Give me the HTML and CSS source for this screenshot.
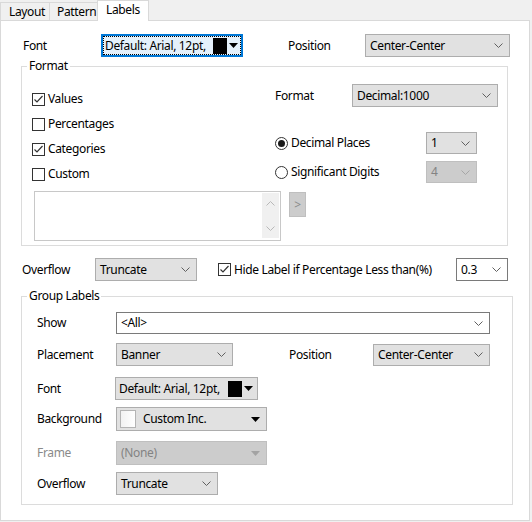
FILE: index.html
```html
<!DOCTYPE html>
<html>
<head>
<meta charset="utf-8">
<title>Labels</title>
<link rel="stylesheet" href="styles.css">
</head>
<body>
<div class="dialog">
  <div class="tabs">
    <div class="tab tab-layout">Layout</div>
    <div class="tab tab-pattern">Pattern</div>
    <div class="tab tab-labels active">Labels</div>
  </div>
  <div class="panel">
    <div class="toprow">
      <span class="lbl lbl-font">Font</span>
      <div class="fontbtn fontbtn-top focus">
        <span class="fb-text">Default: Arial, 12pt,</span>
        <span class="swatch"></span>
        <svg class="tri" width="9" height="5" viewBox="0 0 9 5"><polygon points="0,0 9,0 4.5,5" fill="#000"/></svg>
      </div>
      <span class="lbl lbl-pos">Position</span>
      <div class="dd w145"><span>Center-Center</span><svg class="chev" width="9" height="5" viewBox="0 0 9 5"><path d="M0.5 0.5 L4.5 4.5 L8.5 0.5" fill="none" stroke="#606060"/></svg></div>
    </div>

    <fieldset class="group fmt">
      <legend>Format</legend>
      <div class="fmt-top">
        <div class="checks">
          <div class="chk"><span class="box"><svg width="11" height="11" viewBox="0 0 11 11"><path d="M1.5 5.5 L4 8 L9.5 2" fill="none" stroke="#333" stroke-width="1.2"/></svg></span>Values</div>
          <div class="chk"><span class="box"></span>Percentages</div>
          <div class="chk"><span class="box"><svg width="11" height="11" viewBox="0 0 11 11"><path d="M1.5 5.5 L4 8 L9.5 2" fill="none" stroke="#333" stroke-width="1.2"/></svg></span>Categories</div>
          <div class="chk"><span class="box"></span>Custom</div>
        </div>
        <div class="fmt-right">
          <div class="frow">
            <span class="flbl">Format</span>
            <div class="dd w146"><span>Decimal:1000</span><svg class="chev" width="9" height="5" viewBox="0 0 9 5"><path d="M0.5 0.5 L4.5 4.5 L8.5 0.5" fill="none" stroke="#606060"/></svg></div>
          </div>
          <div class="frow rrow rrow-1">
            <span class="rlbl"><span class="radio on"></span>Decimal Places</span>
            <div class="dd small"><span>1</span><svg class="chev" width="9" height="5" viewBox="0 0 9 5"><path d="M0.5 0.5 L4.5 4.5 L8.5 0.5" fill="none" stroke="#606060"/></svg></div>
          </div>
          <div class="frow rrow rrow-2">
            <span class="rlbl"><span class="radio"></span>Significant Digits</span>
            <div class="dd small disabled"><span>4</span><svg class="chev" width="9" height="5" viewBox="0 0 9 5"><path d="M0.5 0.5 L4.5 4.5 L8.5 0.5" fill="none" stroke="#a6a6a6"/></svg></div>
          </div>
        </div>
      </div>
      <div class="fmt-bottom">
        <div class="memo">
          <div class="memo-text"></div>
          <div class="memo-scroll">
            <svg width="9" height="5" viewBox="0 0 9 5"><path d="M0.5 4.5 L4.5 0.5 L8.5 4.5" fill="none" stroke="#b8b8b8"/></svg>
            <svg width="9" height="5" viewBox="0 0 9 5"><path d="M0.5 0.5 L4.5 4.5 L8.5 0.5" fill="none" stroke="#b8b8b8"/></svg>
          </div>
        </div>
        <div class="arrowbtn">&gt;</div>
      </div>
    </fieldset>

    <div class="ovrow">
      <span class="lbl lbl-ov">Overflow</span>
      <div class="dd w102"><span>Truncate</span><svg class="chev" width="9" height="5" viewBox="0 0 9 5"><path d="M0.5 0.5 L4.5 4.5 L8.5 0.5" fill="none" stroke="#606060"/></svg></div>
      <div class="chk chk-hide"><span class="box"><svg width="11" height="11" viewBox="0 0 11 11"><path d="M1.5 5.5 L4 8 L9.5 2" fill="none" stroke="#333" stroke-width="1.2"/></svg></span>Hide Label if Percentage Less than(%)</div>
      <div class="combo w52"><span>0.3</span><svg class="chev" width="9" height="5" viewBox="0 0 9 5"><path d="M0.5 0.5 L4.5 4.5 L8.5 0.5" fill="none" stroke="#606060"/></svg></div>
    </div>

    <fieldset class="group grp">
      <legend>Group Labels</legend>
      <div class="grow grow-show">
        <span class="glbl">Show</span>
        <div class="combo w374"><span>&lt;All&gt;</span><svg class="chev" width="9" height="5" viewBox="0 0 9 5"><path d="M0.5 0.5 L4.5 4.5 L8.5 0.5" fill="none" stroke="#606060"/></svg></div>
      </div>
      <div class="grow grow-place">
        <span class="glbl">Placement</span>
        <div class="dd w117"><span>Banner</span><svg class="chev" width="9" height="5" viewBox="0 0 9 5"><path d="M0.5 0.5 L4.5 4.5 L8.5 0.5" fill="none" stroke="#606060"/></svg></div>
        <span class="glbl glbl-pos">Position</span>
        <div class="dd w117 h22"><span>Center-Center</span><svg class="chev" width="9" height="5" viewBox="0 0 9 5"><path d="M0.5 0.5 L4.5 4.5 L8.5 0.5" fill="none" stroke="#606060"/></svg></div>
      </div>
      <div class="grow grow-font">
        <span class="glbl">Font</span>
        <div class="fontbtn fontbtn-grp">
          <span class="fb-text">Default: Arial, 12pt,</span>
          <span class="swatch"></span>
          <svg class="tri" width="9" height="5" viewBox="0 0 9 5"><polygon points="0,0 9,0 4.5,5" fill="#000"/></svg>
        </div>
      </div>
      <div class="grow grow-bg">
        <span class="glbl">Background</span>
        <div class="dd w151 h24">
          <span class="bgval"><span class="wswatch"></span>Custom Inc.</span>
          <svg class="tri" width="9" height="5" viewBox="0 0 9 5"><polygon points="0,0 9,0 4.5,5" fill="#000"/></svg>
        </div>
      </div>
      <div class="grow grow-frame">
        <span class="glbl dim">Frame</span>
        <div class="dd w151 h24 disabled">
          <span>(None)</span>
          <svg class="tri" width="9" height="5" viewBox="0 0 9 5"><polygon points="0,0 9,0 4.5,5" fill="#a3a3a3"/></svg>
        </div>
      </div>
      <div class="grow grow-ov">
        <span class="glbl">Overflow</span>
        <div class="dd w102"><span>Truncate</span><svg class="chev" width="9" height="5" viewBox="0 0 9 5"><path d="M0.5 0.5 L4.5 4.5 L8.5 0.5" fill="none" stroke="#606060"/></svg></div>
      </div>
    </fieldset>
  </div>
</div>
</body>
</html>
```

FILE: styles.css
```css
* { box-sizing: border-box; }
html, body { margin: 0; padding: 0; }
body {
  background: #f0f0f0;
  font-family: "Noto Sans", "Open Sans", sans-serif;
  font-size: 12px;
  line-height: 16px;
  letter-spacing: -0.35px;
  color: #000;
  width: 532px;
  height: 522px;
  overflow: hidden;
}

/* tabs */
.tabs { display: flex; align-items: flex-end; height: 20px; }
.tab {
  height: 18px;
  border: 1px solid #d9d9d9;
  border-bottom: none;
  background: #f0f0f0;
  padding: 1px 0 0 8px;
  white-space: nowrap;
  overflow: hidden;
}
.tab + .tab { margin-left: -1px; }
.tab-layout { width: 50px; }
.tab-pattern { width: 49px; padding-left: 7px; }
.tab.active {
  width: 52px;
  height: 21px;
  background: #fff;
  position: relative;
  z-index: 1;
  margin-bottom: -1px;
  padding-top: 1px;
}

/* panel */
.panel {
  width: 530px;
  height: 501px;
  background: #fff;
  border: 1px solid #d9d9d9;
  padding: 13px 0 0 20px;
}

.toprow { display: flex; align-items: center; height: 23px; }
.lbl { white-space: nowrap; }
.lbl-font { width: 80px; padding-left: 2px; }
.lbl-pos { width: 77px; margin-left: 45px; }

/* dropdowns */
.dd, .combo {
  display: flex;
  align-items: center;
  justify-content: space-between;
  height: 23px;
  padding: 0 6px 0 4px;
  border: 1px solid #adadad;
  background: #e1e1e1;
  white-space: nowrap;
  flex: none;
}
.combo { background: #fff; border-color: #7a7a7a; }
.dd.disabled { background: #cccccc; border-color: #bfbfbf; color: #838383; }
.chev { flex: none; }
.w145 { width: 145px; }
.w146 { width: 146px; }
.w102 { width: 102px; }
.w52 { width: 52px; }
.w374 { width: 374px; height: 22px; }
.w117 { width: 117px; }
.w151 { width: 151px; }
.h22 { height: 22px; }
.h24 { height: 24px; }
.small { width: 51px; height: 22px; }

/* font buttons */
.fontbtn {
  display: flex;
  align-items: center;
  height: 23px;
  border: 1px solid #adadad;
  background: #e1e1e1;
  padding: 0 4px 0 3px;
  white-space: nowrap;
  flex: none;
}
.fontbtn.focus {
  border: 1px solid #0078d7;
  box-shadow: inset 0 0 0 1px #0078d7;
  background: #e5f1fb;
  outline: 1px dotted #000;
  outline-offset: -3px;
}
.fontbtn-top { width: 142px; }
.fontbtn-grp { width: 143px; margin-left: -1px; }
.fb-text { flex: 1; }
.swatch { width: 14px; height: 16px; background: #000; margin-right: 2px; flex: none; }
.tri { flex: none; }

/* group boxes */
.group {
  margin: 0;
  border: 1px solid #dcdcdc;
  min-width: 0;
}
.group legend {
  padding: 0 2px;
  line-height: 16px;
}
.fmt {
  margin-top: 1px;
  width: 487px;
  padding: 10px 0 4px 10px;
}
.fmt legend { margin-left: -5px; }
.fmt-top { display: flex; }
.checks {
  width: 243px;
  padding-top: 7px;
  display: flex;
  flex-direction: column;
  gap: 9px;
}
.chk { display: flex; align-items: center; height: 16px; white-space: nowrap; }
.box {
  width: 13px;
  height: 13px;
  border: 1px solid #333;
  background: #fff;
  margin-right: 3px;
  display: flex;
  align-items: center;
  justify-content: center;
  flex: none;
}
.box svg { display: block; }

.fmt-right { display: flex; flex-direction: column; }
.frow { display: flex; align-items: center; }
.flbl { width: 77px; }
.rrow-1 { margin-top: 25px; }
.rrow-2 { margin-top: 7px; }
.rlbl { width: 151px; display: flex; align-items: center; white-space: nowrap; }
.radio {
  width: 13px;
  height: 13px;
  border: 1px solid #333;
  border-radius: 50%;
  background: #fff;
  margin-right: 3px;
  flex: none;
  display: flex;
  align-items: center;
  justify-content: center;
}
.radio.on::after {
  content: "";
  width: 7px;
  height: 7px;
  border-radius: 50%;
  background: #1a1a1a;
}

.fmt-bottom { display: flex; align-items: flex-start; margin-top: 8px; }
.memo {
  width: 247px;
  height: 50px;
  margin-left: 2px;
  border: 1px solid #c8c8c8;
  background: #fff;
  display: flex;
  padding: 1px 1px 2px 0;
}
.memo-text { flex: 1; }
.memo-scroll {
  width: 17px;
  background: #f0f0f0;
  display: flex;
  flex-direction: column;
  justify-content: space-between;
  align-items: center;
  padding: 8px 0 7px;
}
.memo-scroll svg { display: block; }
.arrowbtn {
  width: 17px;
  height: 25px;
  margin: 1px 0 0 8px;
  background: #cccccc;
  border: 1px solid #bfbfbf;
  color: #8a8a8a;
  display: flex;
  align-items: center;
  justify-content: center;
}

/* overflow row */
.ovrow {
  display: flex;
  align-items: center;
  width: 487px;
  height: 23px;
  margin-top: 12px;
}
.lbl-ov { width: 74px; padding-left: 1px; }
.chk-hide { margin-left: 21px; }
.ovrow .combo { margin-left: auto; }

/* group labels */
.grp {
  margin-top: 7px;
  width: 492px;
  padding: 8px 0 9px 15px;
}
.grp legend { margin-left: -10px; }
.grow { display: flex; align-items: center; }
.glbl { width: 79px; white-space: nowrap; flex: none; }
.glbl-pos { width: 84px; margin-left: 56px; }
.dim { color: #8a8a8a; }
.grow-place { margin-top: 9px; }
.grow-font { margin-top: 11px; }
.grow-bg { margin-top: 7px; }
.grow-frame { margin-top: 10px; }
.grow-ov { margin-top: 7px; }
.bgval { display: flex; align-items: center; }
.wswatch {
  width: 16px;
  height: 18px;
  border: 1px solid #b4b4b4;
  background: linear-gradient(90deg, #f2f2f2, #fff);
  margin-right: 7px;
  margin-left: -1px;
}
```
